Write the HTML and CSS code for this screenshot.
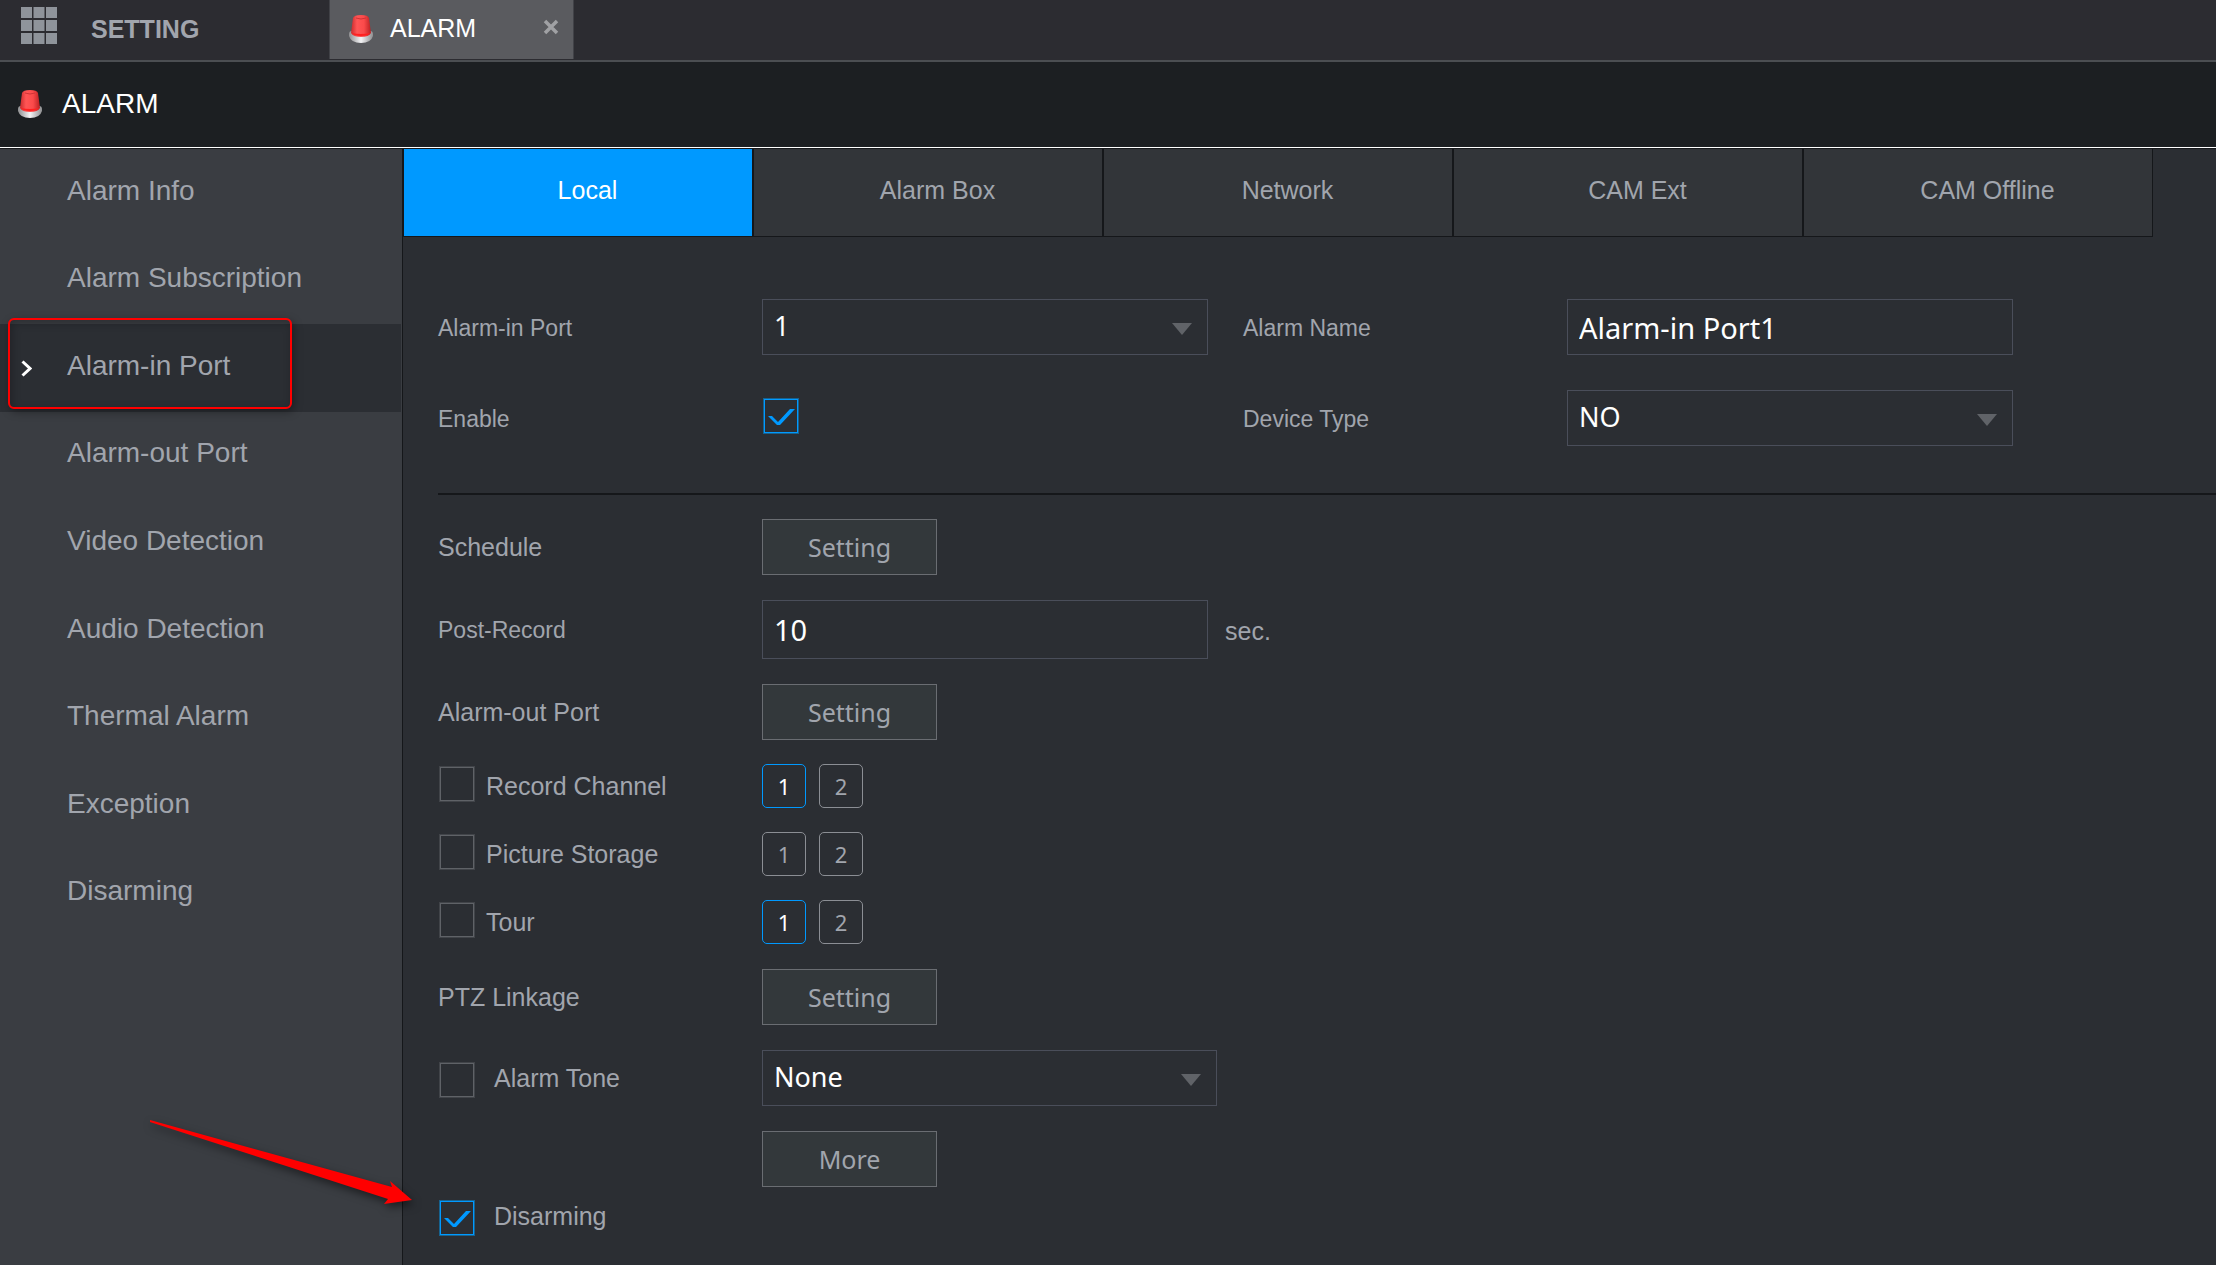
FILE: index.html
```html
<!DOCTYPE html>
<html lang="en">
<head>
<meta charset="utf-8">
<meta name="viewport" content="width=device-width, initial-scale=1">
<title>Alarm</title>
<link rel="stylesheet" href="styles.css">
</head>
<body>
<svg class="defs" aria-hidden="true">
  <defs>
    <linearGradient id="dome" x1="0" x2="1" y1="0" y2="0">
      <stop offset="0" stop-color="#c92a2c"/>
      <stop offset=".3" stop-color="#ff5555"/>
      <stop offset=".65" stop-color="#fb4a4a"/>
      <stop offset="1" stop-color="#b92022"/>
    </linearGradient>
    <linearGradient id="base" x1="0" x2="1" y1="0" y2="0">
      <stop offset="0" stop-color="#8d8d8f"/>
      <stop offset=".5" stop-color="#f4f4f6"/>
      <stop offset="1" stop-color="#8d8d8f"/>
    </linearGradient>
    <symbol id="siren" viewBox="0 0 24 28">
      <path d="M0 19 Q0 16 3 16 H21 Q24 16 24 19 V21 Q22 28 12 28 Q2 28 0 21 Z" fill="url(#base)"/>
      <path d="M4 3 Q5 0 12 0 Q19 0 20 3 L22 18 Q20 22 12 22 Q4 22 2 18 Z" fill="url(#dome)"/>
      <path d="M3 18 Q5 21 12 21 Q19 21 21 18 Q17 19 12 19 Q7 19 3 18 Z" fill="#ff2020"/>
      <path d="M7 3 Q12 5 17 3" fill="none" stroke="#cf3436" stroke-width="1"/>
    </symbol>
  </defs>
</svg>

<header class="topbar">
  <button class="home" type="button">
    <svg class="grid-icon" viewBox="0 0 36 37" aria-hidden="true">
      <path d="M0 0h11v11H0zM12.500 0h11v11h-11zM25 0h11v11H25zM0 13h11v11H0zM12.500 13h11v11h-11zM25 13h11v11H25zM0 26h11v11H0zM12.500 26h11v11h-11zM25 26h11v11H25z" fill="#8f949b"/>
    </svg>
    <span>SETTING</span>
  </button>
  <div class="page-tab">
    <svg class="siren" aria-hidden="true"><use href="#siren"/></svg>
    <span class="page-tab-name">ALARM</span>
    <button class="close" type="button" aria-label="Close">
      <svg viewBox="0 0 16 16" aria-hidden="true"><path d="M2 2L14 14M14 2L2 14" stroke="#a0a1a4" stroke-width="3.500"/></svg>
    </button>
  </div>
</header>

<div class="heading">
  <svg class="siren" aria-hidden="true"><use href="#siren"/></svg>
  <h1>ALARM</h1>
</div>

<div class="body">
  <nav class="sidebar">
    <a href="#">Alarm Info</a>
    <a href="#">Alarm Subscription</a>
    <a href="#" class="current" aria-current="page">
      <svg class="chevron" viewBox="0 0 11 17" aria-hidden="true"><path d="M1.500 1.500L9 8.500L1.500 15.500" fill="none" stroke="#fff" stroke-width="3"/></svg>
      Alarm-in Port
      <span class="highlight"></span>
    </a>
    <a href="#">Alarm-out Port</a>
    <a href="#">Video Detection</a>
    <a href="#">Audio Detection</a>
    <a href="#">Thermal Alarm</a>
    <a href="#">Exception</a>
    <a href="#">Disarming</a>
  </nav>

  <main class="content">
    <div class="tabs">
      <button type="button" class="tab active">Local</button>
      <button type="button" class="tab">Alarm Box</button>
      <button type="button" class="tab">Network</button>
      <button type="button" class="tab">CAM Ext</button>
      <button type="button" class="tab">CAM Offline</button>
    </div>

    <form class="form">
      <div class="port">
        <label for="port">Alarm-in Port</label>
        <div class="select"><select id="port"><option>1</option></select></div>
        <label for="name">Alarm Name</label>
        <input class="text" id="name" type="text" value="Alarm-in Port1">
        <label for="enable">Enable</label>
        <input class="check" id="enable" type="checkbox" checked>
        <label for="type">Device Type</label>
        <div class="select"><select id="type"><option>NO</option></select></div>
      </div>

      <div class="rows record">
        <div class="row">
          <label for="schedule">Schedule</label>
          <button class="btn" id="schedule" type="button">Setting</button>
        </div>
        <div class="row">
          <label class="small" for="post">Post-Record</label>
          <input class="text tall" id="post" type="text" value="10">
          <span class="unit">sec.</span>
        </div>
        <div class="row">
          <label for="out">Alarm-out Port</label>
          <button class="btn" id="out" type="button">Setting</button>
        </div>
      </div>

      <div class="rows">
        <div class="row">
          <label class="tick"><input class="check" type="checkbox">Record Channel</label>
          <div class="channels">
            <button type="button" class="channel on" aria-pressed="true">1</button>
            <button type="button" class="channel" aria-pressed="false">2</button>
          </div>
        </div>
        <div class="row">
          <label class="tick"><input class="check" type="checkbox">Picture Storage</label>
          <div class="channels">
            <button type="button" class="channel" aria-pressed="false">1</button>
            <button type="button" class="channel" aria-pressed="false">2</button>
          </div>
        </div>
        <div class="row">
          <label class="tick"><input class="check" type="checkbox">Tour</label>
          <div class="channels">
            <button type="button" class="channel on" aria-pressed="true">1</button>
            <button type="button" class="channel" aria-pressed="false">2</button>
          </div>
        </div>
      </div>

      <div class="rows linkage">
        <div class="row">
          <label for="ptz">PTZ Linkage</label>
          <button class="btn" id="ptz" type="button">Setting</button>
        </div>
        <div class="row">
          <label class="tick wide"><input class="check" type="checkbox">Alarm Tone</label>
          <div class="select tone"><select aria-label="Alarm Tone"><option>None</option></select></div>
        </div>
        <div class="row">
          <span></span>
          <button class="btn" type="button">More</button>
        </div>
      </div>

      <div class="disarm">
        <label class="tick wide"><input class="check" type="checkbox" checked>Disarming</label>
        <svg class="arrow" viewBox="0 0 270 96" aria-hidden="true">
          <path d="M4 4L246 71L244 65L266 84L238 88L242 83L4 6Z" fill="#f00"/>
        </svg>
      </div>
    </form>
  </main>
</div>
</body>
</html>
```
FILE: styles.css
```css
* {
  box-sizing: border-box;
}

body {
  margin: 0;
  min-height: 100vh;
  display: flex;
  flex-direction: column;
  background: #2b2e33;
  color: #a1a5ad;
  font-family: "Liberation Sans", Arial, sans-serif;
  font-size: 25px;
}

button,
input,
select {
  margin: 0;
  font: inherit;
  color: inherit;
}

button {
  padding: 0;
  border: 0;
  background: none;
}

.defs {
  position: absolute;
  width: 0;
  height: 0;
}

/* Top bar */

.topbar {
  display: flex;
  height: 62px;
  background: #2c2c31;
  border-bottom: 2px solid #4b4e52;
}

.home {
  display: flex;
  align-items: center;
  gap: 34px;
  width: 329px;
  padding: 0 0 2px 21px;
  font-weight: bold;
}

.grid-icon {
  width: 36px;
  height: 37px;
  margin-bottom: 7px;
}

.page-tab {
  display: flex;
  align-items: center;
  width: 245px;
  height: 59px;
  padding: 0 14px 2px 19px;
  background: #5a5b5f;
  border: solid #414247;
  border-width: 0 1px;
  color: #fff;
}

.page-tab-name {
  flex: 1;
  margin-left: 17px;
}

.siren {
  width: 24px;
  height: 28px;
}

.close {
  display: flex;
  margin-bottom: 4px;
}

.close svg {
  width: 16px;
  height: 16px;
}

.heading {
  display: flex;
  align-items: center;
  gap: 20px;
  height: 86px;
  padding: 0 0 1px 18px;
  background: #1c1f22;
  border-bottom: 1px solid #fff;
  color: #fff;
}

.heading h1 {
  margin: 0;
  font-size: 28px;
  font-weight: normal;
}

/* Sidebar */

.body {
  flex: 1;
  display: flex;
  border-top: 1px solid #16181b;
  background: linear-gradient(to right, #3a3d42 402px, #15171a 402px, #15171a 403px, #2b2e33 403px);
}

.sidebar {
  flex: none;
  display: grid;
  grid-template-rows: repeat(9, 1fr);
  width: 403px;
  height: 788px;
  font-size: 28px;
}

.sidebar a {
  display: flex;
  align-items: center;
  position: relative;
  margin-right: 2px;
  padding: 0 0 4px 67px;
  color: inherit;
  text-decoration: none;
}

.sidebar .current {
  background: #2b2e33;
}

.chevron {
  position: absolute;
  left: 21px;
  top: 36px;
  width: 11px;
  height: 17px;
}

.highlight {
  position: absolute;
  left: 8px;
  top: -6px;
  width: 284px;
  height: 91px;
  border: 2px solid #f00;
  border-radius: 6px;
  box-shadow: 2px 3px 8px rgba(0, 0, 0, .35), inset 2px 3px 8px rgba(0, 0, 0, .25);
}

/* Tabs */

.content {
  flex: 1;
  min-width: 0;
}

.tabs {
  display: flex;
}

.tab {
  flex: 1;
  max-width: 350px;
  height: 88px;
  padding: 0 0 5px 19px;
  background: #323539;
  border: solid #15171a;
  border-width: 0 1px 1px;
}

.tab.active {
  background: #09f;
  color: #fff;
}

/* Form */

.form {
  display: flex;
  flex-direction: column;
  gap: 24px;
  padding-left: 35px;
}

.port {
  display: grid;
  grid-template-columns: 324px minmax(0, 446px) 359px minmax(0, 446px);
  grid-auto-rows: 56px;
  align-items: center;
  row-gap: 35px;
  padding: 62px 0 47px;
  border-bottom: 2px solid #15171a;
  font-size: 23px;
}

.port label {
  padding-top: 2px;
}

.port label:nth-of-type(even) {
  padding-left: 35px;
}

.select {
  display: grid;
  grid-template-columns: 1fr 36px;
  align-items: center;
}

.select::after {
  content: "";
  grid-area: 1 / 2;
  width: 20px;
  height: 12px;
  margin-top: 4px;
  background: #606368;
  clip-path: polygon(0 0, 100% 0, 50% 100%);
  pointer-events: none;
}

.select select,
.text {
  width: 100%;
  height: 56px;
  border: 1px solid #4a4e5a;
  border-radius: 0;
  background: #2b2e33;
  color: #fff;
  font-family: "Noto Sans", "Open Sans", sans-serif;
}

.select select {
  grid-area: 1 / 1 / 2 / 3;
  appearance: none;
  padding: 0 40px 3px 11px;
  font-size: 27px;
}

.text {
  padding: 0 11px;
  font-size: 29px;
}

.rows {
  display: flex;
  flex-direction: column;
  gap: 24px;
}

.rows.record,
.rows.linkage {
  gap: 25px;
}

.rows.linkage {
  padding-top: 1px;
}

.row {
  display: grid;
  grid-template-columns: 324px minmax(0, 446px) 1fr;
  align-items: center;
}

.small {
  padding-top: 2px;
  font-size: 23px;
}

.text.tall {
  height: 59px;
}

.unit {
  padding: 4px 0 0 17px;
}

.tone {
  width: 455px;
}

.btn {
  width: 175px;
  height: 56px;
  background: #33383b;
  border: 1px solid #6a6d72;
  font-family: "Noto Sans", "Open Sans", sans-serif;
}

.tick {
  display: flex;
  align-items: center;
  gap: 11px;
  padding-left: 1px;
}

.tick.wide {
  gap: 19px;
}

.check {
  flex: none;
  appearance: none;
  position: relative;
  width: 36px;
  height: 36px;
  border: 1px solid #414449;
  box-shadow: inset 0 0 0 1px #5f6267;
}

.port .check {
  margin: 0 0 4px 1px;
}

.tick .check {
  margin-bottom: 4px;
}

.tick.wide .check {
  margin: 4px 0 0;
}

.check:checked {
  border-color: #17628f;
  box-shadow: inset 0 0 0 1px #09f;
}

.check:checked::before {
  content: "";
  position: absolute;
  inset: 0;
  background: #09f;
  clip-path: polygon(4px 17px, 8px 17px, 14px 23px, 26px 10px, 31px 10px, 16px 26px, 13px 26px);
}

.channels {
  display: flex;
  gap: 13px;
}

.channel {
  width: 44px;
  height: 44px;
  border: 1px solid #8b8e94;
  border-radius: 5px;
  font-family: "Noto Sans", "Open Sans", sans-serif;
  font-size: 22px;
}

.channel.on {
  border-color: #09f;
  color: #fff;
}

.disarm {
  position: relative;
  margin-top: -15px;
}

/* Pointer drawn over the sidebar and the form */
.arrow {
  position: absolute;
  left: -292px;
  top: -80px;
  width: 270px;
  height: 96px;
  overflow: visible;
  filter: drop-shadow(2px 4px 4px rgba(0, 0, 0, .5));
}
```
